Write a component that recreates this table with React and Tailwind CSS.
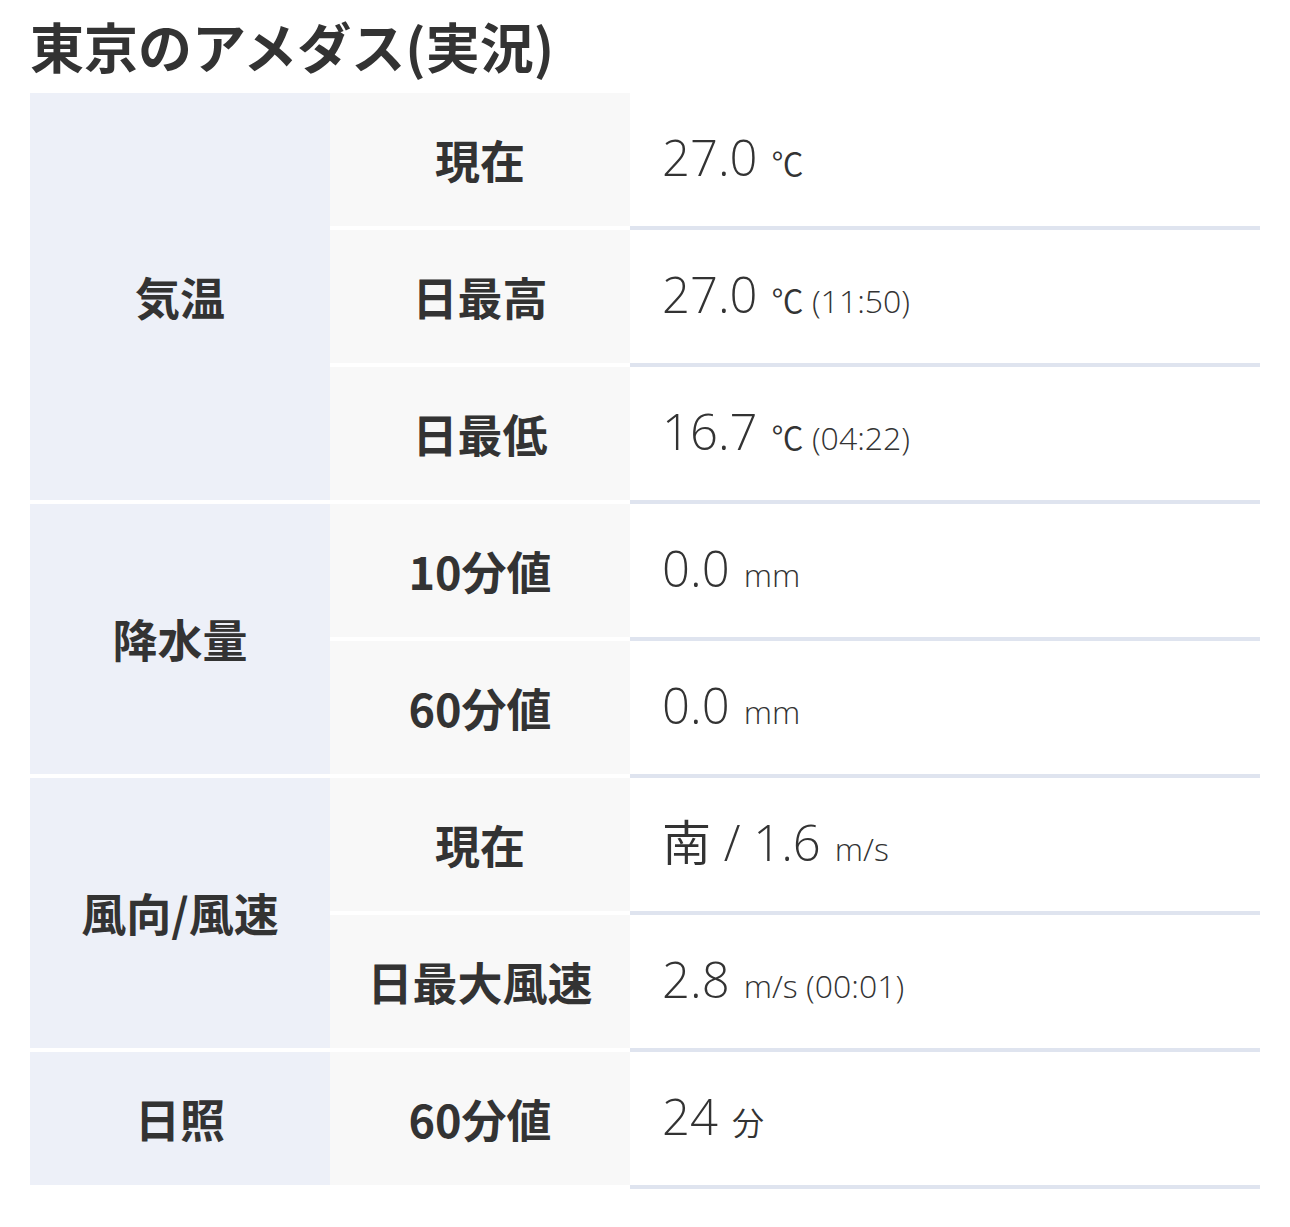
const ROWS = [
  { group: "気温", span: 3, label: "現在", value: "27.0", unit: "℃" },
  { label: "日最高", value: "27.0", unit: "℃ (11:50)" },
  { label: "日最低", value: "16.7", unit: "℃ (04:22)" },
  { group: "降水量", span: 2, label: "10分値", value: "0.0", unit: "mm" },
  { label: "60分値", value: "0.0", unit: "mm" },
  { group: "風向/風速", span: 2, label: "現在", value: "南 / 1.6", unit: "m/s" },
  { label: "日最大風速", value: "2.8", unit: "m/s (00:01)" },
  { group: "日照", span: 1, label: "60分値", value: "24", unit: "分" },
];

export default function App() {
  return (
    <div
      className="min-h-screen bg-white px-[30px] text-[#333]"
      style={{ fontFamily: '"Noto Sans CJK JP", "Noto Sans", sans-serif' }}
    >
      <h1 className="flex h-[93px] items-center pb-[2px] text-[54px] font-bold leading-none">
        東京のアメダス(実況)
      </h1>

      <table className="w-[1230px] table-fixed border-separate border-spacing-0">
        <colgroup>
          <col className="w-[300px]" />
          <col className="w-[300px]" />
          <col />
        </colgroup>
        <tbody>
          {ROWS.map((r, i) => (
            <tr key={i} className="h-[137px]">
              {r.group && (
                <th
                  rowSpan={r.span}
                  className="border-b-4 border-white bg-[#edf0f8] text-center text-[45px] font-bold"
                >
                  {r.group}
                </th>
              )}
              <th className="border-b-4 border-white bg-[#f8f8f8] text-center text-[45px] font-bold">
                {r.label}
              </th>
              <td
                className="border-b-4 border-[#dfe4ef] pb-[4px] pl-[32px] align-middle font-[350]"
                style={{ fontFamily: '"Open Sans", "Noto Sans CJK JP", sans-serif' }}
              >
                <span className="text-[49px]">{r.value}</span>
                <span className="ml-[14px] text-[32px]">{r.unit}</span>
              </td>
            </tr>
          ))}
        </tbody>
      </table>
    </div>
  );
}
